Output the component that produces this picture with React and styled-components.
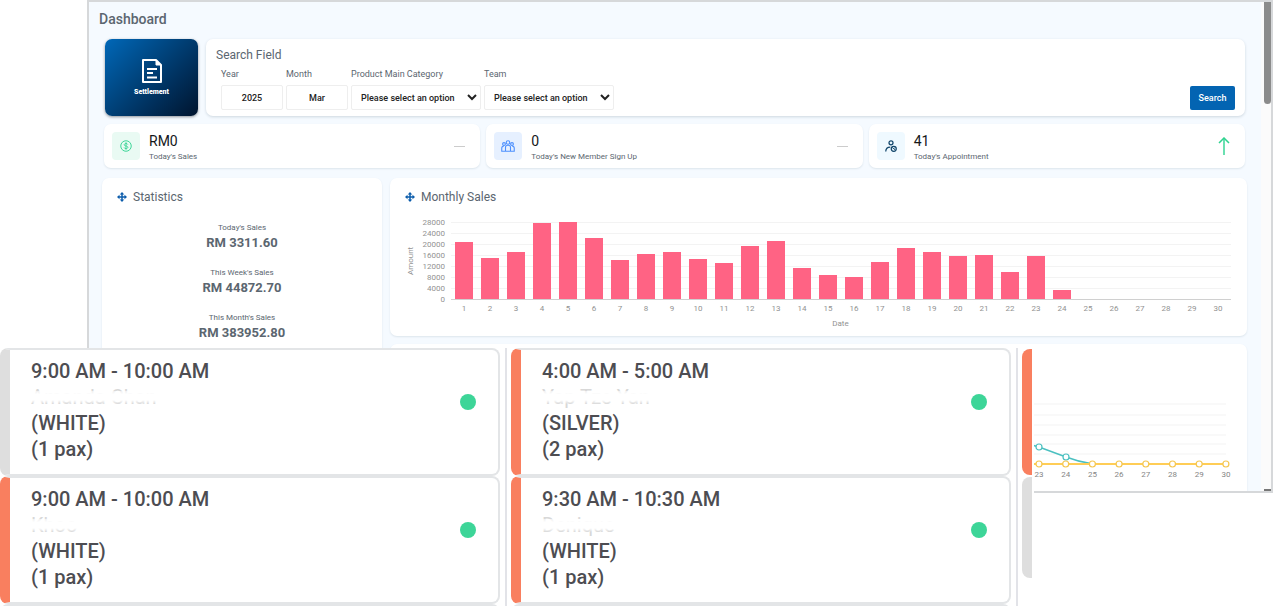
import React from 'react'
import styled, { createGlobalStyle } from 'styled-components'

const GlobalStyle = createGlobalStyle`
  * {
    box-sizing: border-box;
  }

  body {
    margin: 0;
    background: #ffffff;
    color: #5b6670;
    font-family: Roboto, "Liberation Sans", sans-serif;
    font-size: 10px;
  }
`

const sales = [
  20900, 15000, 17100, 27500, 27950, 22100, 14100, 16200, 17200, 14400,
  13000, 19300, 21000, 11400, 8900, 8000, 13500, 18600, 17000, 15800,
  16100, 9800, 15700, 3300, 0, 0, 0, 0, 0, 0,
]

const ticks = [28000, 24000, 20000, 16000, 12000, 8000, 4000, 0]

const statistics = [
  { label: "Today's Sales", value: 'RM 3311.60' },
  { label: "This Week's Sales", value: 'RM 44872.70' },
  { label: "This Month's Sales", value: 'RM 383952.80' },
]

const bookings = [
  [
    { time: '9:00 AM - 10:00 AM', name: 'Amanda Chan', tier: 'WHITE', pax: 1, color: '#dedede' },
    { time: '9:00 AM - 10:00 AM', name: 'Khoo', tier: 'WHITE', pax: 1, color: '#f97f5f' },
  ],
  [
    { time: '4:00 AM - 5:00 AM', name: 'Yap Tze Yan', tier: 'SILVER', pax: 2, color: '#f97f5f' },
    { time: '9:30 AM - 10:30 AM', name: 'Denique', tier: 'WHITE', pax: 1, color: '#f97f5f' },
  ],
]

const CoinIcon = () => (
  <svg width="12" height="12" viewBox="0 0 24 24" fill="none" stroke="#3fd699" strokeWidth="2">
    <circle cx="12" cy="12" r="10.5" />
    <path d="M15.500 9c-.5-1.500-1.700-2-3.500-2-2 0-3.500 1-3.500 2.500s1.300 2.200 3.500 2.500c2.200.3 3.700 1 3.700 2.600S14 17.200 12 17.200s-3.300-.8-3.800-2.200M12 4.500v15" />
  </svg>
)

const MembersIcon = () => (
  <svg width="14" height="12" viewBox="0 0 28 24" fill="none" stroke="#4d90fe" strokeWidth="2.200">
    <circle cx="14" cy="5" r="3.500" />
    <circle cx="6" cy="8" r="2.800" />
    <circle cx="22" cy="8" r="2.800" />
    <path d="M9 22.500v-8c0-2.500 2-4 5-4s5 1.500 5 4v8zM9 22.500H1.500v-6c0-3 2-4.500 4.500-4.500M19 22.500h7.500v-6c0-3-2-4.500-4.500-4.500" />
  </svg>
)

const AppointmentIcon = () => (
  <svg width="12" height="12" viewBox="0 0 24 24" fill="none" stroke="#12466b" strokeWidth="2.500">
    <circle cx="12" cy="5.500" r="4" />
    <path d="M1.500 23c0-5.500 3.500-9 9-9" />
    <circle cx="17.500" cy="17.500" r="5" />
    <path d="M14.500 15l6 5M17.500 17.500l2.500-2.500" strokeWidth="1.800" />
  </svg>
)

const DocumentIcon = () => (
  <svg width="20" height="24" viewBox="0 0 20 24" fill="none" stroke="#ffffff" strokeWidth="2">
    <path d="M1 1h13l5 5v17H1z" strokeLinejoin="round" />
    <path d="M14 1v5h5z" fill="#ffffff" strokeWidth="1" />
    <path d="M5 10h10M5 14h6M5 18.500h10" />
  </svg>
)

const MoveIcon = () => (
  <svg width="10" height="10" viewBox="0 0 20 20" fill="#0b5cab">
    <path d="M10 0l4.500 5h-3v3.500H15v-3l5 4.500-5 4.500v-3h-3.500V15h3L10 20l-4.500-5h3v-3.500H5v3L0 10l5-4.500v3h3.500V5h-3z" />
  </svg>
)

const UpIcon = () => (
  <svg width="12" height="18" viewBox="0 0 12 18" fill="none">
    <path d="M6 1v17" stroke="#6be0b1" strokeWidth="2" />
    <path d="M1 6l5-5 5 5" stroke="#2fd28f" strokeWidth="1.500" />
  </svg>
)

const summary = [
  { value: 'RM0', label: "Today's Sales", icon: <CoinIcon />, tint: '#e9faf3' },
  { value: '0', label: "Today's New Member Sign Up", icon: <MembersIcon />, tint: '#e6f0ff' },
  { value: '41', label: "Today's Appointment", icon: <AppointmentIcon />, tint: '#eff9ff', up: true },
]

const TrendChart = () => (
  <TrendSvg viewBox="0 0 206 96">
    {[8, 19, 29, 39, 48, 58].map((y) => (
      <line key={y} x1="0" x2="198" y1={y} y2={y} stroke="#f3f3f3" />
    ))}
    <path d="M0 48L11 51L38 61Q51 66 65 68" fill="none" stroke="#4bc0c0" strokeWidth="1.500" />
    <path d="M0 68H198" stroke="#ffcd56" strokeWidth="2" />
    <circle cx="11" cy="51" r="3" fill="#fff" stroke="#4bc0c0" strokeWidth="1.200" />
    <circle cx="38" cy="61" r="3" fill="#fff" stroke="#4bc0c0" strokeWidth="1.200" />
    {[23, 24, 25, 26, 27, 28, 29, 30].map((day, i) => (
      <g key={day}>
        <circle cx={11 + i * 26.7} cy="68" r="3" fill="#fff" stroke="#f5c64f" strokeWidth="1.200" />
        <text x={11 + i * 26.7} y="81" textAnchor="middle" fontSize="8" fill="#858585">{day}</text>
      </g>
    ))}
  </TrendSvg>
)

const App = () => (
  <Page>
    <GlobalStyle />
    <Browser>
      <Dashboard>
        <Title>Dashboard</Title>

        <TopRow>
          <SettlementButton type="button">
            <DocumentIcon />
            Settlement
          </SettlementButton>
          <SearchCard>
            <SearchTitle>Search Field</SearchTitle>
            <SearchRow>
              <Field $width={62}>
                <label htmlFor="year">Year</label>
                <TextInput id="year" defaultValue="2025" />
              </Field>
              <Field $width={62}>
                <label htmlFor="month">Month</label>
                <TextInput id="month" defaultValue="Mar" />
              </Field>
              <Field $width={130}>
                <label htmlFor="category">Product Main Category</label>
                <Dropdown id="category">
                  <option>Please select an option</option>
                </Dropdown>
              </Field>
              <Field $width={130}>
                <label htmlFor="team">Team</label>
                <Dropdown id="team">
                  <option>Please select an option</option>
                </Dropdown>
              </Field>
              <SearchButton type="button">Search</SearchButton>
            </SearchRow>
          </SearchCard>
        </TopRow>

        <SummaryRow>
          {summary.map((item) => (
            <SummaryCard key={item.label}>
              <IconBox $tint={item.tint}>{item.icon}</IconBox>
              <SummaryText>
                <SummaryValue>{item.value}</SummaryValue>
                <SummaryLabel>{item.label}</SummaryLabel>
              </SummaryText>
              {item.up ? <UpIcon /> : <Dash />}
            </SummaryCard>
          ))}
        </SummaryRow>

        <Panels>
          <Panel>
            <PanelTitle><MoveIcon />Statistics</PanelTitle>
            <StatisticList>
              {statistics.map(({ label, value }) => (
                <Statistic key={label}>
                  <span>{label}</span>
                  <strong>{value}</strong>
                </Statistic>
              ))}
            </StatisticList>
          </Panel>

          <ChartColumn>
            <Panel>
              <PanelTitle><MoveIcon />Monthly Sales</PanelTitle>
              <Chart>
                <AxisName>Amount</AxisName>
                <Scale>
                  {ticks.map((tick) => <span key={tick}>{tick}</span>)}
                </Scale>
                <Plot>
                  <Bars>
                    {sales.map((amount, i) => (
                      <Slot key={i}>
                        <Bar style={{ height: `${(amount / 28000) * 100}%` }} />
                      </Slot>
                    ))}
                  </Bars>
                  <Days>
                    {sales.map((_, i) => <span key={i}>{i + 1}</span>)}
                  </Days>
                </Plot>
              </Chart>
              <DateName>Date</DateName>
            </Panel>
            <TrendPanel>
              <TrendChart />
            </TrendPanel>
          </ChartColumn>
        </Panels>
      </Dashboard>
      <Scrollbar>
        <Thumb />
        <ThumbEnd />
      </Scrollbar>
    </Browser>

    <Schedule>
      {bookings.map((column, i) => (
        <BookingColumn key={i}>
          {column.map((booking) => (
            <Booking key={booking.name} $color={booking.color}>
              <BookingText>
                <div>{booking.time}</div>
                <Faded>{booking.name}</Faded>
                <div>({booking.tier})</div>
                <div>({booking.pax} pax)</div>
              </BookingText>
              <Status />
            </Booking>
          ))}
          <NextBooking />
        </BookingColumn>
      ))}
      <EdgeColumn>
        <Edge $color="#f97f5f" $height={126} />
        <Edge $color="#dedede" $height={101} />
      </EdgeColumn>
    </Schedule>
  </Page>
)

const Page = styled.div`
  position: relative;
  min-height: 100vh;
  overflow: hidden;
`

const Browser = styled.div`
  display: flex;
  height: 493px;
  margin: 0 1px 0 87px;
  border: 2px solid #d6d8da;
  overflow: hidden;
`

const Dashboard = styled.main`
  flex: 1;
  min-width: 0;
  padding: 8px 14px 0 13px;
  background: #f5faff;
`

const Title = styled.h1`
  margin: 0 0 11px -3px;
  font-size: 14px;
  font-weight: 500;
  line-height: 18px;
`

const TopRow = styled.div`
  display: flex;
  gap: 8px;
  margin: 0 2px 0 3px;
`

const SettlementButton = styled.button`
  display: flex;
  flex-direction: column;
  align-items: center;
  justify-content: center;
  gap: 4px;
  width: 93px;
  height: 77px;
  padding: 0;
  border: 0;
  border-radius: 7px;
  background: linear-gradient(135deg, #0068b8 0%, #003d72 50%, #00142e 100%);
  box-shadow: 0 1px 3px #8d9298;
  color: #ffffff;
  font: 900 7px/10px Roboto, sans-serif;
`

const SearchCard = styled.section`
  flex: 1;
  height: 77px;
  padding: 8px 10px 0;
  border-radius: 7px;
  background: #ffffff;
  box-shadow: 0 1px 3px #cdd7df;
`

const SearchTitle = styled.h2`
  margin: 0 0 4px;
  font-size: 12px;
  font-weight: 400;
  line-height: 16px;
`

const SearchRow = styled.div`
  display: flex;
  align-items: flex-end;
  gap: 3px;
  padding-left: 5px;
`

const Field = styled.div`
  display: flex;
  flex-direction: column;
  gap: 4px;
  width: ${({ $width }) => $width}px;
  font-size: 9px;
  line-height: 14px;
  white-space: nowrap;
`

const TextInput = styled.input`
  width: 100%;
  height: 25px;
  border: 1px solid #eeeeee;
  border-radius: 2px;
  background: #ffffff;
  color: #222222;
  font: 500 9px Roboto, sans-serif;
  text-align: center;
`

const Dropdown = styled.select`
  width: 100%;
  height: 25px;
  padding: 0 0 0 5px;
  border: 1px solid #eeeeee;
  border-radius: 2px;
  background: #ffffff;
  color: #222222;
  font: 500 9px Roboto, sans-serif;
`

const SearchButton = styled.button`
  width: 45px;
  height: 24px;
  margin-left: auto;
  padding: 0;
  border: 0;
  border-radius: 2px;
  background: #0364b2;
  color: #ffffff;
  font: 500 9px Roboto, sans-serif;
`

const SummaryRow = styled.div`
  display: grid;
  grid-template-columns: repeat(3, 1fr);
  gap: 6px;
  margin: 8px 2px 10px;
`

const SummaryCard = styled.section`
  display: flex;
  align-items: center;
  height: 44px;
  padding: 0 15px 0 8px;
  border-radius: 7px;
  background: #ffffff;
  box-shadow: 0 1px 2px #dce5ec;
`

const IconBox = styled.div`
  display: flex;
  align-items: center;
  justify-content: center;
  width: 28px;
  height: 28px;
  border-radius: 4px;
  background: ${({ $tint }) => $tint};
`

const SummaryText = styled.div`
  flex: 1;
  display: grid;
  gap: 1px;
  padding: 2px 0 0 9px;
`

const SummaryValue = styled.div`
  color: #15171a;
  font-size: 14px;
  line-height: 18px;
`

const SummaryLabel = styled.div`
  font-size: 8px;
  line-height: 12px;
`

const Dash = styled.span`
  width: 11px;
  height: 1px;
  background: #cccccc;
`

const Panels = styled.div`
  display: grid;
  grid-template-columns: 280px minmax(0, 1fr);
  gap: 8px;
`

const Panel = styled.section`
  padding: 10px 15px 0;
  border-radius: 7px;
  background: #ffffff;
  box-shadow: 0 1px 2px #dce5ec;
`

const PanelTitle = styled.h2`
  display: flex;
  align-items: center;
  gap: 6px;
  margin: 0;
  font-size: 12px;
  font-weight: 400;
  line-height: 18px;
`

const StatisticList = styled.div`
  display: grid;
  gap: 15px;
  padding-top: 16px;
`

const Statistic = styled.div`
  display: grid;
  justify-items: center;
  font-size: 8px;
  line-height: 12px;

  strong {
    font-size: 13px;
    line-height: 18px;
  }
`

const ChartColumn = styled.div`
  display: grid;
  grid-template-rows: 158px 160px;
  gap: 8px;
`

const Chart = styled.div`
  display: flex;
  padding-top: 11px;
  color: #929292;
  font-size: 8px;
`

const AxisName = styled.div`
  width: 12px;
  height: 88px;
  text-align: center;
  line-height: 12px;
  writing-mode: vertical-rl;
  rotate: 180deg;
`

const Scale = styled.div`
  display: flex;
  flex-direction: column;
  width: 28px;
  line-height: 11px;
  text-align: right;
`

const Plot = styled.div`
  flex: 1;
  padding: 5px 1px 0 6px;
`

const Bars = styled.div`
  display: grid;
  grid-template-columns: repeat(30, 1fr);
  height: 78px;
  border-bottom: 1px solid #d0d0d0;
  background: repeating-linear-gradient(#f3f3f3 0 1px, transparent 1px 11px);
`

const Slot = styled.div`
  display: flex;
  align-items: flex-end;
  justify-content: center;
`

const Bar = styled.div`
  width: 73%;
  background: #ff6384;
`

const Days = styled.div`
  display: grid;
  grid-template-columns: repeat(30, 1fr);
  padding-top: 2px;
  line-height: 14px;
  text-align: center;
`

const DateName = styled.div`
  padding-left: 44px;
  color: #929292;
  font-size: 8px;
  line-height: 16px;
  text-align: center;
`

const TrendPanel = styled(Panel)`
  display: flex;
  justify-content: flex-end;
  padding: 52px 13px 0;
`

const TrendSvg = styled.svg`
  width: 206px;
  height: 96px;
`

const Scrollbar = styled.div`
  display: flex;
  flex-direction: column;
  justify-content: space-between;
  align-items: flex-end;
  width: 10px;
  background: #fbfbfb;
`

const Thumb = styled.div`
  width: 7px;
  height: 102px;
  border-radius: 0 0 4px 4px;
  background: #8b8b8b;
`

const ThumbEnd = styled.div`
  width: 7px;
  height: 2px;
  background: #777777;
`

const Schedule = styled.section`
  position: absolute;
  top: 348px;
  left: 0;
  display: grid;
  grid-template-columns: 1fr 1fr 12px;
  width: 1034px;
  max-width: 100%;
  height: 258px;
  overflow: hidden;
  background: #ffffff;
`

const BookingColumn = styled.div`
  display: flex;
  flex-direction: column;
  margin-right: 4px;
  padding-right: 5px;
  border-right: 2px solid #e2e3e8;
`

const Booking = styled.article`
  display: flex;
  flex-shrink: 0;
  align-items: center;
  justify-content: space-between;
  height: 128px;
  padding: 0 22px 0 21px;
  border: 2px solid #e3e5e7;
  border-left: 10px solid ${({ $color }) => $color};
  border-radius: 8px;
  background: #ffffff;
`

const BookingText = styled.div`
  padding-bottom: 4px;
  color: #4d4d52;
  font-size: 20px;
  font-weight: 500;
  line-height: 26px;
`

const Faded = styled.div`
  position: relative;
  color: #d8d8d8;
  font-weight: 400;

  &::after {
    content: '';
    position: absolute;
    inset: 7px 0 6px;
    background: linear-gradient(#ffffff99, #ffffff 25%, #ffffff 70%, #ffffff00);
  }
`

const Status = styled.span`
  width: 16px;
  height: 16px;
  margin-bottom: 20px;
  border-radius: 50%;
  background: #3dd598;
`

const NextBooking = styled.div`
  flex-shrink: 0;
  height: 20px;
  border-top: 2px solid #e3e5e7;
  border-radius: 8px;
`

const EdgeColumn = styled.div`
  display: flex;
  flex-direction: column;
  gap: 2px;
  padding-top: 1px;
`

const Edge = styled.div`
  width: 10px;
  height: ${({ $height }) => $height}px;
  border-radius: 8px 0 0 8px;
  background: ${({ $color }) => $color};
`

export default App
